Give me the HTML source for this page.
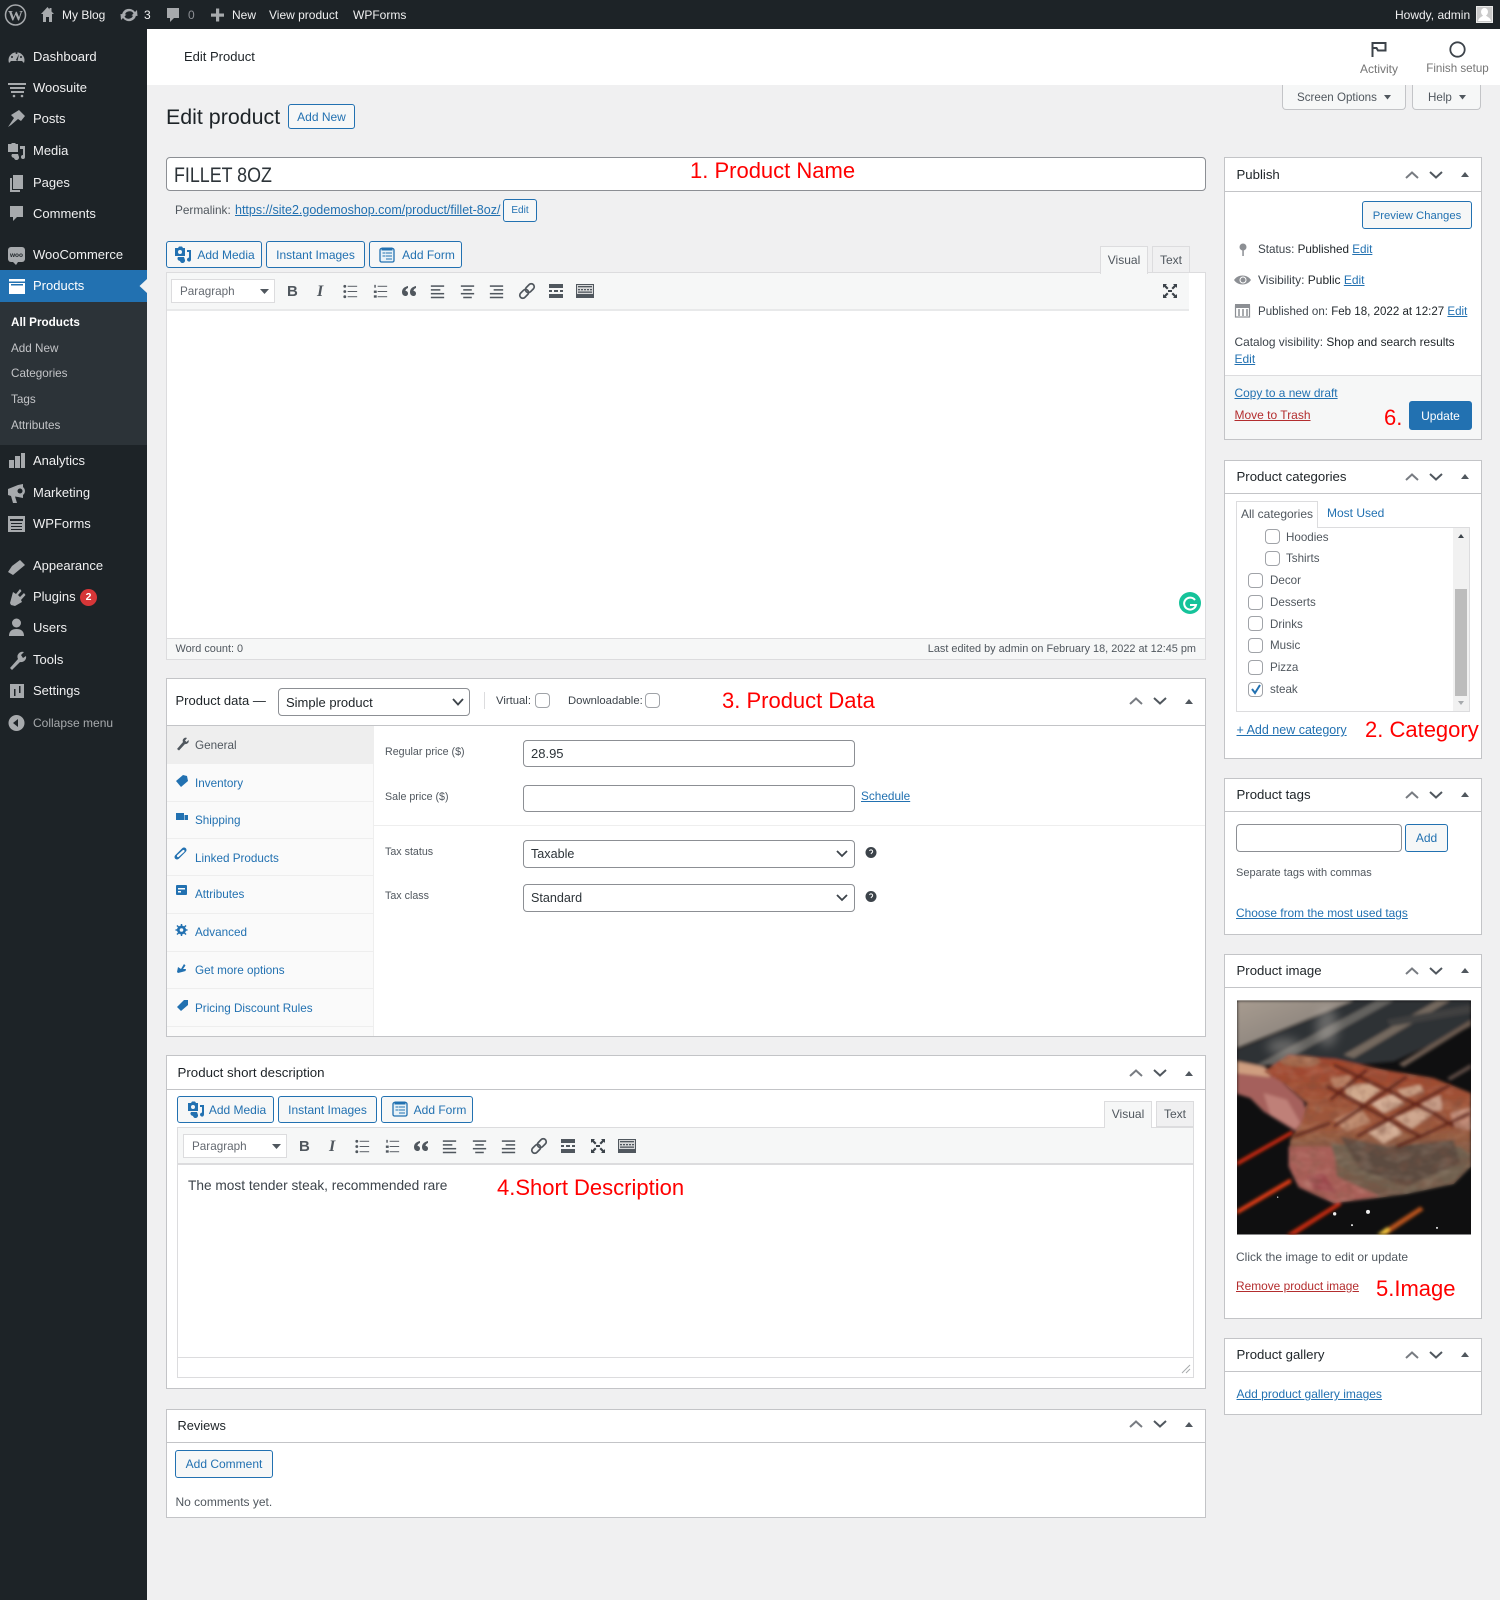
<!DOCTYPE html>
<html><head><meta charset="utf-8"><title>Edit product</title>
<style>
html,body{margin:0;padding:0}
body{width:1500px;height:1600px;position:relative;overflow:hidden;background:#f0f0f1;font-family:"Liberation Sans",sans-serif;font-size:12.5px;color:#3c434a}
div,span,a{position:absolute;box-sizing:border-box}
.t{white-space:nowrap;line-height:16px}
a.t,.lk{color:#2271b1;text-decoration:underline}
.m{color:#f0f0f1;font-size:13px;left:33px}
.s{color:#c3c4c7;font-size:11.7px;left:11px}
.ab{color:#f0f0f1;font-size:12px}
.b{background:#fff;border:1px solid #c3c4c7}
.l{background:#c3c4c7;height:1px}
.h{color:#1d2327;font-size:13.2px}
.btn{background:#f6f7f7;border:1px solid #2271b1;border-radius:3px;color:#2271b1;text-align:center;font-size:12px;line-height:26px;white-space:nowrap}
.r{color:#f00;font-size:22px;white-space:nowrap;line-height:26px}
.in{background:#fff;border:1px solid #8c8f94;border-radius:4px;color:#2c3338;font-size:13px;padding-left:7px;white-space:nowrap}
.cb{background:#fff;border:1px solid #a0a3a8;border-radius:4px;width:15px;height:15px}
.tab{background:#f0f0f1;border:1px solid #dcdcde;color:#50575e;font-size:12px;text-align:center;line-height:25px}
.ta{background:#f6f7f7;border-bottom:0;border-color:#dcdcde}
.pt{color:#2271b1;font-size:11.7px;left:195px}
.sep{background:#eee;height:1px;left:167px;width:206px}
.fl{color:#50575e;font-size:10.7px;left:385px}
.g{color:#50575e;font-size:11.6px}
.d{color:#3c434a;font-size:12px}
.tb{background:#f6f7f7}
</style></head><body>

<!-- admin bar -->
<div style="left:0;top:0;width:1500px;height:29px;background:#1d2327"></div>
<div class="t ab" style="left:62px;top:7px">My Blog</div>
<div class="t ab" style="left:144px;top:7px">3</div>
<div class="t ab" style="left:188px;top:7px;color:#8c8f94">0</div>
<div class="t ab" style="left:232px;top:7px">New</div>
<div class="t ab" style="left:269px;top:7px">View product</div>
<div class="t ab" style="left:353px;top:7px">WPForms</div>
<div class="t ab" style="left:1395px;top:7px">Howdy, admin</div>
<div style="left:1476px;top:6px;width:17px;height:17px;background:#c9c9c9;border:1px solid #e8e8e8"></div>

<!-- sidebar -->
<div style="left:0;top:29px;width:147px;height:1571px;background:#1d2327"></div>
<div style="left:0;top:302px;width:147px;height:143px;background:#2c3338"></div>
<div style="left:0;top:270px;width:147px;height:32px;background:#2271b1"></div>
<div class="t m" style="top:49px">Dashboard</div>
<div class="t m" style="top:80px">Woosuite</div>
<div class="t m" style="top:111px">Posts</div>
<div class="t m" style="top:143px">Media</div>
<div class="t m" style="top:175px">Pages</div>
<div class="t m" style="top:206px">Comments</div>
<div class="t m" style="top:247px">WooCommerce</div>
<div class="t m" style="top:278px;color:#fff">Products</div>
<div class="t s" style="top:315px;color:#fff;font-weight:bold">All Products</div>
<div class="t s" style="top:341px">Add New</div>
<div class="t s" style="top:366px">Categories</div>
<div class="t s" style="top:392px">Tags</div>
<div class="t s" style="top:418px">Attributes</div>
<div class="t m" style="top:453px">Analytics</div>
<div class="t m" style="top:485px">Marketing</div>
<div class="t m" style="top:516px">WPForms</div>
<div class="t m" style="top:558px">Appearance</div>
<div class="t m" style="top:589px">Plugins</div>
<div class="t m" style="top:620px">Users</div>
<div class="t m" style="top:652px">Tools</div>
<div class="t m" style="top:683px">Settings</div>
<div class="t m" style="top:715px;color:#a7aaad;font-size:12px">Collapse menu</div>
<div class="t" style="left:80px;top:589px;width:17px;height:17px;border-radius:50%;background:#d63638;color:#fff;font-size:10.5px;text-align:center;font-weight:bold">2</div>

<!-- header -->
<div style="left:147px;top:29px;width:1353px;height:56px;background:#fff"></div>
<div class="t" style="left:184px;top:49px;color:#1d2327;font-size:13px">Edit Product</div>
<div class="t" style="left:1339px;top:61px;width:80px;text-align:center;color:#757575;font-size:12px">Activity</div>
<div class="t" style="left:1417.500px;top:61px;width:80px;text-align:center;color:#757575;font-size:11.6px">Finish setup</div>
<div style="left:1282px;top:85px;width:124px;height:25px;background:#f6f7f7;border:1px solid #c3c4c7;border-top:0;border-radius:0 0 4px 4px"></div>
<div style="left:1412px;top:85px;width:69px;height:25px;background:#f6f7f7;border:1px solid #c3c4c7;border-top:0;border-radius:0 0 4px 4px"></div>
<div class="t g" style="left:1297px;top:90px">Screen Options</div>
<div class="t g" style="left:1428px;top:90px">Help</div>

<div class="t" style="left:166px;top:105px;line-height:24px;font-size:21.4px;color:#1d2327">Edit product</div>
<div class="btn" style="left:288px;top:104px;width:67px;height:25px;line-height:24px">Add New</div>

<!-- title -->
<div class="in" style="left:166px;top:157px;width:1040px;height:34px;padding-left:8px"><span style="left:7px;top:1px;font-size:21px;line-height:34px;color:#2c3338;display:block;transform:scaleX(.85);transform-origin:0 0">FILLET 8OZ</span></div>
<div class="r" style="left:690px;top:158px">1. Product Name</div>
<div class="t d" style="left:175px;top:202px;color:#50575e;font-size:11.8px">Permalink:</div>
<a class="t" style="left:235px;top:202px;font-size:12.5px">https://site2.godemoshop.com/product/fillet-8oz/</a>
<div class="btn" style="left:503px;top:199px;width:34px;height:23px;font-size:10px;line-height:22px">Edit</div>

<div class="btn" style="left:166px;top:241px;width:96px;height:27px;padding-left:24px">Add Media</div>
<div class="btn" style="left:266px;top:241px;width:99px;height:27px">Instant Images</div>
<div class="btn" style="left:369px;top:241px;width:93px;height:27px;padding-left:26px">Add Form</div>

<!-- main editor -->
<div class="b" style="left:166px;top:272px;width:1040px;height:388px;border-color:#dcdcde"></div>
<div class="tb" style="left:167px;top:273px;width:1022px;height:38px;border-bottom:2px solid #e8e9ea"></div>
<div class="tab ta" style="left:1100px;top:246px;width:48px;height:28px;line-height:26px">Visual</div>
<div class="tab" style="left:1152px;top:246px;width:38px;height:27px;line-height:26px">Text</div>
<div class="t" style="left:171px;top:279px;width:104px;height:24px;background:#fff;border:1px solid #dcdcde;line-height:24px;padding-left:8px;color:#646970;font-size:11.7px">Paragraph</div>
<div class="t" style="left:287px;top:283px;font:bold 15px/18px 'Liberation Sans',sans-serif;color:#50575e;width:10px">B</div>
<div class="t" style="left:317px;top:283px;font:italic bold 16px/18px 'Liberation Serif',serif;color:#50575e">I</div>
<div style="left:167px;top:638px;width:1038px;height:21px;background:#f6f7f7;border-top:1px solid #dcdcde"></div>
<div class="t" style="left:175.500px;top:641px;font-size:10.9px;color:#50575e">Word count: 0</div>
<div class="t" style="right:304px;top:641px;font-size:10.9px;color:#50575e">Last edited by admin on February 18, 2022 at 12:45 pm</div>

<!-- product data -->
<div class="b" style="left:166px;top:678px;width:1040px;height:359px"></div>
<div class="l" style="left:166px;top:725px;width:1040px"></div>
<div class="t h" style="left:175.500px;top:693px;font-size:13px">Product data —</div>
<div class="in" style="left:278px;top:688px;width:192px;height:28px;line-height:28px;font-size:13px;color:#1d2327">Simple product</div>
<div style="left:484px;top:692px;width:1px;height:17px;background:#dcdcde"></div>
<div class="t" style="left:496px;top:693px;font-size:11.3px;color:#3c434a">Virtual:</div>
<div class="cb" style="left:535px;top:693px"></div>
<div class="t" style="left:568px;top:693px;font-size:11.3px;color:#3c434a">Downloadable:</div>
<div class="cb" style="left:645px;top:693px"></div>
<div class="r" style="left:722px;top:688px">3. Product Data</div>

<div style="left:167px;top:726px;width:207px;height:310px;background:#fafafa;border-right:1px solid #eee"></div>
<div style="left:167px;top:726px;width:206px;height:38px;background:#eee"></div>
<div class="sep" style="top:801px"></div><div class="sep" style="top:838px"></div><div class="sep" style="top:875px"></div><div class="sep" style="top:913px"></div><div class="sep" style="top:951px"></div><div class="sep" style="top:988px"></div><div class="sep" style="top:1026px"></div>
<div class="t pt" style="top:738px;color:#50575e">General</div>
<div class="t pt" style="top:776px">Inventory</div>
<div class="t pt" style="top:813px">Shipping</div>
<div class="t pt" style="top:851px">Linked Products</div>
<div class="t pt" style="top:887px">Attributes</div>
<div class="t pt" style="top:925px">Advanced</div>
<div class="t pt" style="top:963px">Get more options</div>
<div class="t pt" style="top:1001px">Pricing Discount Rules</div>

<div class="t fl" style="top:744px">Regular price ($)</div>
<div class="in" style="left:523px;top:740px;width:332px;height:27px;line-height:26px">28.95</div>
<div class="t fl" style="top:789px">Sale price ($)</div>
<div class="in" style="left:523px;top:785px;width:332px;height:27px"></div>
<a class="t" style="left:861px;top:788px;font-size:11.8px">Schedule</a>
<div style="left:374px;top:825px;width:831px;height:1px;background:#eee"></div>
<div class="t fl" style="top:844px">Tax status</div>
<div class="in" style="left:523px;top:840px;width:332px;height:28px;line-height:27px;font-size:12.6px">Taxable</div>
<div class="t fl" style="top:888px">Tax class</div>
<div class="in" style="left:523px;top:884px;width:332px;height:28px;line-height:27px;font-size:12.6px">Standard</div>

<!-- short description -->
<div class="b" style="left:166px;top:1055px;width:1040px;height:334px"></div>
<div class="l" style="left:166px;top:1089px;width:1040px"></div>
<div class="t h" style="left:177.500px;top:1065px;font-size:13.3px">Product short description</div>
<div class="btn" style="left:177px;top:1096px;width:97px;height:27px;padding-left:24px">Add Media</div>
<div class="btn" style="left:278px;top:1096px;width:99px;height:27px">Instant Images</div>
<div class="btn" style="left:381px;top:1096px;width:92px;height:27px;padding-left:26px">Add Form</div>
<div class="b" style="left:177px;top:1127px;width:1017px;height:251px;border-color:#dcdcde"></div>
<div class="tb" style="left:178px;top:1128px;width:1015px;height:37px;border-bottom:2px solid #dcdcde"></div>
<div class="tab ta" style="left:1104px;top:1101px;width:48px;height:27px">Visual</div>
<div class="tab" style="left:1156px;top:1101px;width:38px;height:26px">Text</div>
<div class="t" style="left:183px;top:1134px;width:104px;height:24px;background:#fff;border:1px solid #dcdcde;line-height:24px;padding-left:8px;color:#646970;font-size:11.7px">Paragraph</div>
<div class="t" style="left:299px;top:1138px;font:bold 15px/18px 'Liberation Sans',sans-serif;color:#50575e">B</div>
<div class="t" style="left:329px;top:1138px;font:italic bold 16px/18px 'Liberation Serif',serif;color:#50575e">I</div>
<div class="t" style="left:188px;top:1178px;font-size:13.7px;color:#3c434a">The most tender steak, recommended rare</div>
<div class="r" style="left:497px;top:1175px">4.Short Description</div>
<div style="left:178px;top:1357px;width:1015px;height:20px;background:#fff;border-top:1px solid #dcdcde"></div>

<!-- reviews -->
<div class="b" style="left:166px;top:1409px;width:1040px;height:109px"></div>
<div class="l" style="left:166px;top:1442px;width:1040px"></div>
<div class="t h" style="left:177.500px;top:1418px;font-size:12.8px">Reviews</div>
<div class="btn" style="left:175px;top:1450px;width:98px;height:28px">Add Comment</div>
<div class="t" style="left:175.500px;top:1494px;font-size:12px;color:#50575e">No comments yet.</div>

<!-- publish -->
<div class="b" style="left:1224px;top:157px;width:258px;height:283px"></div>
<div class="l" style="left:1224px;top:191px;width:258px"></div>
<div class="t h" style="left:1236.500px;top:167px">Publish</div>
<div class="btn" style="left:1362px;top:201px;width:110px;height:28px;font-size:11.3px;line-height:28px">Preview Changes</div>
<div class="t d" style="left:1258px;top:241.500px;font-size:11.7px">Status: <b style="font-weight:normal;color:#1d2327">Published</b> <span class="lk" style="position:static">Edit</span></div>
<div class="t d" style="left:1258px;top:272px">Visibility: <b style="font-weight:normal;color:#1d2327">Public</b> <span class="lk" style="position:static">Edit</span></div>
<div class="t d" style="left:1258px;top:303.500px;font-size:11.55px">Published on: <b style="font-weight:normal;color:#1d2327">Feb 18, 2022 at 12:27</b> <span class="lk" style="position:static">Edit</span></div>
<div class="t d" style="left:1234.500px;top:334px;font-size:11.9px">Catalog visibility: <b style="font-weight:normal;color:#1d2327">Shop and search results</b></div>
<a class="t" style="left:1234.500px;top:351px;font-size:12px">Edit</a>
<div style="left:1225px;top:375px;width:256px;height:64px;background:#f6f7f7;border-top:1px solid #dcdcde"></div>
<a class="t" style="left:1234.500px;top:385px;font-size:11.9px">Copy to a new draft</a>
<a class="t" style="left:1234.500px;top:407px;font-size:12px;color:#b32d2e">Move to Trash</a>
<div class="r" style="left:1384px;top:405px">6.</div>
<div class="btn" style="left:1409px;top:401px;width:63px;height:29px;background:#2271b1;color:#fff;line-height:28px">Update</div>

<!-- categories -->
<div class="b" style="left:1224px;top:460px;width:258px;height:299px"></div>
<div class="l" style="left:1224px;top:493px;width:258px"></div>
<div class="t h" style="left:1236.500px;top:469px">Product categories</div>
<div class="b" style="left:1236px;top:527px;width:234px;height:185px;border-color:#dcdcde"></div>
<div style="left:1236px;top:501px;width:82px;height:27px;background:#fff;border:1px solid #dcdcde;border-bottom:0;line-height:25px;text-align:center;font-size:12px;color:#50575e">All categories</div>
<div class="t" style="left:1327px;top:505px;font-size:12px;color:#2271b1">Most Used</div>
<div style="left:1453px;top:528px;width:16px;height:183px;background:#f1f1f1"></div>
<div style="left:1455px;top:589px;width:12px;height:107px;background:#bcbcbc"></div>
<div class="cb" style="left:1265px;top:529px"></div><div class="t g" style="left:1286px;top:530px">Hoodies</div>
<div class="cb" style="left:1265px;top:551px"></div><div class="t g" style="left:1286px;top:551px">Tshirts</div>
<div class="cb" style="left:1248px;top:573px"></div><div class="t g" style="left:1270px;top:573px">Decor</div>
<div class="cb" style="left:1248px;top:595px"></div><div class="t g" style="left:1270px;top:595px">Desserts</div>
<div class="cb" style="left:1248px;top:616px"></div><div class="t g" style="left:1270px;top:617px">Drinks</div>
<div class="cb" style="left:1248px;top:638px"></div><div class="t g" style="left:1270px;top:638px">Music</div>
<div class="cb" style="left:1248px;top:660px"></div><div class="t g" style="left:1270px;top:660px">Pizza</div>
<div class="cb" style="left:1248px;top:682px"></div><div class="t g" style="left:1270px;top:682px">steak</div>
<a class="t" style="left:1236.500px;top:722px;font-size:12.5px">+ Add new category</a>
<div class="r" style="left:1365px;top:717px;font-size:22px">2. Category</div>

<!-- tags -->
<div class="b" style="left:1224px;top:778px;width:258px;height:157px"></div>
<div class="l" style="left:1224px;top:811px;width:258px"></div>
<div class="t h" style="left:1236.500px;top:787px">Product tags</div>
<div class="in" style="left:1236px;top:824px;width:166px;height:28px"></div>
<div class="btn" style="left:1405px;top:824px;width:43px;height:28px">Add</div>
<div class="t" style="left:1236px;top:865px;font-size:11px;color:#50575e">Separate tags with commas</div>
<a class="t" style="left:1236px;top:905px;font-size:11.9px">Choose from the most used tags</a>

<!-- image -->
<div class="b" style="left:1224px;top:954px;width:258px;height:365px"></div>
<div class="l" style="left:1224px;top:987px;width:258px"></div>
<div class="t h" style="left:1236.500px;top:963px">Product image</div>
<svg style="position:absolute;left:1237px;top:1000px" width="234" height="235" viewBox="50 32 702 702">
<defs><filter id="bl" x="-10%" y="-10%" width="120%" height="120%"><feGaussianBlur stdDeviation="5"/></filter>
<filter id="bs" x="-30%" y="-30%" width="160%" height="160%"><feGaussianBlur stdDeviation="16"/></filter>
<filter id="nz" x="0" y="0" width="100%" height="100%"><feTurbulence type="fractalNoise" baseFrequency=".02 .035" numOctaves="2" seed="7"/><feColorMatrix values="0 0 0 0 .92  0 0 0 0 .7  0 0 0 0 .55  1.6 0 0 0 -.7"/><feGaussianBlur stdDeviation="3"/><feComposite in2="SourceGraphic" operator="in"/></filter>
<filter id="nd" x="0" y="0" width="100%" height="100%"><feTurbulence type="fractalNoise" baseFrequency=".03" numOctaves="2" seed="3"/><feColorMatrix values="0 0 0 0 .2  0 0 0 0 .08  0 0 0 0 .05  0 2 0 0 -.85"/><feGaussianBlur stdDeviation="2.500"/><feComposite in2="SourceGraphic" operator="in"/></filter>
<linearGradient id="tp" x1="0" y1="0" x2="1" y2="1"><stop offset="0" stop-color="#a89c90"/><stop offset="1" stop-color="#7c7672"/></linearGradient>
<linearGradient id="st" x1="0" y1="0" x2="0" y2="1"><stop offset="0" stop-color="#a2452c"/><stop offset=".5" stop-color="#9c5a3e"/><stop offset=".75" stop-color="#77604e"/><stop offset="1" stop-color="#6e5648"/></linearGradient>
<path id="mt" d="M130 245 L205 195 L300 205 L345 208 L480 238 L640 265 L752 310 L752 530 L700 582 L560 612 L490 622 L340 640 L235 592 L205 530 L210 450 L245 395 L260 340 L190 280Z"/></defs>
<rect x="50" y="32" width="702" height="702" fill="#0f0f10"/>
<g filter="url(#bl)">
<polygon points="50,32 400,32 50,175" fill="url(#tp)"/>
<polygon points="50,180 400,32 752,32 752,110 520,215 400,225 150,225 50,240" fill="#2f3134"/>
<polygon points="110,225 470,32 520,32 170,225" fill="#64625f"/>
<polygon points="370,195 650,32 690,32 400,205" fill="#75695f"/>
<polygon points="535,222 752,90 752,106 550,232" fill="#6a5a50"/>
<polygon points="680,265 752,222 752,236 690,272" fill="#5d4c44"/>
<polygon points="500,90 752,45 752,70 510,110" fill="#3f3f41"/>
<polygon points="50,515 215,422 218,432 50,528" fill="#d42a10"/>
<polygon points="50,660 210,566 214,578 50,674" fill="#e63c12"/>
<polygon points="198,734 355,636 365,644 225,734" fill="#c92c10"/>
<polygon points="470,734 600,650 610,660 500,734" fill="#b8521a"/>
<polygon points="470,734 500,712 510,720 495,734" fill="#f2c23a"/>
<path d="M50 215 L135 232 L250 335 L262 380 L225 424 L130 365 L90 325 L50 312Z" fill="#a5605c"/>
<path d="M50 215 L135 232 L150 262 L50 250Z" fill="#cf9e80"/>
<path d="M130 310 L200 330 L240 400 L225 418 L150 375Z" fill="#bf8078"/>
<use href="#mt" fill="url(#st)"/>
<path d="M205 470 L340 470 L350 560 L480 620 L340 640 L235 592 L205 530Z" fill="#a85f58"/>
<path d="M330 460 L520 480 L720 470 L752 500 L700 580 L560 610 L430 570 L350 520Z" fill="#70604f"/>
<path d="M360 440 L500 470 L700 450 L720 520 L560 590 L420 540Z" fill="#5c4c40"/>
<path d="M370 290 L450 280 L480 300 L430 340 L380 320Z" fill="#cfa88c"/>
<path d="M450 340 L520 310 L550 340 L490 370Z" fill="#d3ad95"/>
<path d="M520 380 L610 350 L640 370 L570 420Z" fill="#c9a088"/>
<path d="M440 425 L510 390 L545 430 L490 460Z" fill="#d0aa92"/>
<path d="M530 300 L600 285 L610 305 L550 325Z" fill="#c89c82"/>
<path d="M600 340 L660 315 L665 360 L630 370Z" fill="#c49a85"/>
<path d="M330 265 L390 255 L400 280 L340 295Z" fill="#b87f63"/>
<path d="M340 390 L420 355 L450 395 L380 425Z" fill="#bd8a6e"/>
<path d="M690 370 L750 355 L750 420 L700 410Z" fill="#c28c78"/>
<ellipse cx="240" cy="215" rx="60" ry="16" fill="#a56a4e"/>
<path d="M260 560 L310 550 L350 610 L280 600Z" fill="#9c4a4e"/>
</g>
<use href="#mt" filter="url(#nz)" opacity=".28"/>
<use href="#mt" filter="url(#nd)" opacity=".45"/>
<g stroke="#571f12" stroke-width="8" fill="none" filter="url(#bl)" opacity=".9">
<path d="M340 225 L500 300 L640 370 L700 410"/><path d="M320 290 L450 360 L600 440"/>
<path d="M440 240 L330 330"/><path d="M560 260 L430 350 L340 410"/><path d="M690 285 L500 390 L410 440"/><path d="M750 370 L600 440 L530 470"/>
<path d="M220 440 L330 400"/>
</g>
<g fill="#d5cec6" filter="url(#bs)" opacity=".35"><ellipse cx="320" cy="110" rx="32" ry="60"/><ellipse cx="190" cy="170" rx="50" ry="24"/></g>
<g fill="#eee"><circle cx="443" cy="666" r="6"/><circle cx="343" cy="672" r="5"/><circle cx="395" cy="706" r="3"/><circle cx="650" cy="714" r="3"/><circle cx="172" cy="622" r="2"/></g>
</svg>
<div class="t g" style="left:1236px;top:1249px;font-size:12px">Click the image to edit or update</div>
<a class="t" style="left:1236px;top:1278px;font-size:11.9px;color:#b32d2e">Remove product image</a>
<div class="r" style="left:1376px;top:1276px">5.Image</div>

<!-- gallery -->
<div class="b" style="left:1224px;top:1338px;width:258px;height:77px"></div>
<div class="l" style="left:1224px;top:1371px;width:258px"></div>
<div class="t h" style="left:1236.500px;top:1347px">Product gallery</div>
<a class="t" style="left:1236.500px;top:1386px;font-size:12px">Add product gallery images</a>

<!-- icon overlay -->
<svg style="position:absolute;left:0;top:0" width="1500" height="1600" viewBox="0 0 1500 1600">
<defs>
<symbol id="up" viewBox="0 0 16 10"><path d="M2 8 L8 2.5 L14 8" fill="none" stroke="#787c82" stroke-width="2"/></symbol>
<symbol id="dn" viewBox="0 0 16 10"><path d="M2 2 L8 7.5 L14 2" fill="none" stroke="#50575e" stroke-width="2"/></symbol>
<symbol id="ul" viewBox="0 0 20 20"><g fill="#50575e"><circle cx="4" cy="4.5" r="1.5"/><circle cx="4" cy="10" r="1.5"/><circle cx="4" cy="15.5" r="1.5"/><rect x="7" y="4" width="10" height="1"/><rect x="7" y="9.5" width="10" height="1"/><rect x="7" y="15" width="10" height="1"/></g></symbol>
<symbol id="ol" viewBox="0 0 20 20"><g fill="#50575e"><rect x="3.500" y="3" width="1.500" height="3"/><rect x="3" y="9" width="3" height="2.500"/><rect x="3" y="14" width="3" height="2.500"/><rect x="7" y="4" width="10" height="1"/><rect x="7" y="9.5" width="10" height="1"/><rect x="7" y="15" width="10" height="1"/></g></symbol>
<symbol id="qt" viewBox="0 0 20 20"><g fill="#50575e"><path d="M9 5 C5 6 3 8 3 11 C3 14 5 15 6.5 15 C8 15 9 14 9 12.5 C9 11 8 10 6.5 10 C6.5 8.5 7.5 7.5 9 7Z"/><path d="M17 5 C13 6 11 8 11 11 C11 14 13 15 14.5 15 C16 15 17 14 17 12.5 C17 11 16 10 14.5 10 C14.5 8.5 15.5 7.5 17 7Z"/></g></symbol>
<symbol id="al" viewBox="0 0 20 20"><g fill="#50575e"><rect x="3" y="3.5" width="14" height="1.6"/><rect x="3" y="7.5" width="10" height="1.6"/><rect x="3" y="11.5" width="14" height="1.6"/><rect x="3" y="15.5" width="14" height="1.6"/></g></symbol>
<symbol id="ac" viewBox="0 0 20 20"><g fill="#50575e"><rect x="3" y="3.5" width="14" height="1.6"/><rect x="5.5" y="7.5" width="9" height="1.6"/><rect x="3" y="11.5" width="14" height="1.6"/><rect x="5.5" y="15.5" width="9" height="1.6"/></g></symbol>
<symbol id="ar" viewBox="0 0 20 20"><g fill="#50575e"><rect x="3" y="3.5" width="14" height="1.6"/><rect x="7" y="7.5" width="10" height="1.6"/><rect x="3" y="11.5" width="14" height="1.6"/><rect x="3" y="15.5" width="14" height="1.6"/></g></symbol>
<symbol id="lnk" viewBox="0 0 20 20"><g fill="none" stroke="#50575e" stroke-width="1.7" transform="rotate(-45 10 10)"><rect x="1" y="7" width="10" height="6" rx="3"/><rect x="9" y="7" width="10" height="6" rx="3"/></g></symbol>
<symbol id="hr" viewBox="0 0 20 20"><g fill="#50575e"><rect x="3" y="3" width="14" height="4"/><rect x="3" y="9" width="3" height="2"/><rect x="8" y="9" width="4" height="2"/><rect x="14" y="9" width="3" height="2"/><rect x="3" y="13" width="14" height="4"/></g></symbol>
<symbol id="ex" viewBox="0 0 20 20"><g fill="#3c434a"><path d="M3 3 L7 3 L5.800 4.200 L8.500 7 L7 8.500 L4.200 5.800 L3 7Z"/><path d="M17 3 L13 3 L14.200 4.200 L11.500 7 L13 8.500 L15.800 5.800 L17 7Z"/><path d="M3 17 L7 17 L5.800 15.800 L8.500 13 L7 11.500 L4.200 14.200 L3 13Z"/><path d="M17 17 L13 17 L14.200 15.800 L11.500 13 L13 11.500 L15.800 14.200 L17 13Z"/><rect x="8" y="9" width="4" height="2"/></g></symbol>
<symbol id="kb" viewBox="0 0 20 20"><rect x="1.500" y="3.500" width="17" height="13" fill="#d8d9da" stroke="#50575e"/><g fill="#50575e"><rect x="3" y="5" width="14" height="1.300"/><rect x="3" y="8" width="2" height="1.300"/><rect x="6" y="8" width="2" height="1.300"/><rect x="9" y="8" width="2" height="1.300"/><rect x="12" y="8" width="2" height="1.300"/><rect x="15" y="8" width="2" height="1.300"/><rect x="3" y="10.500" width="14" height="1.300"/><rect x="2" y="13" width="16" height="3"/></g></symbol>
<symbol id="mediaB" viewBox="0 0 20 20"><path d="M2 3 H5 L6 1.5 H9 L10 3 H12 V11 H2Z M7 5 A2 2 0 1 0 7 9 A2 2 0 1 0 7 5Z" fill="#2271b1" fill-rule="evenodd"/><path d="M14 5 H18 V14.5 A2 2 0 1 1 16 12.6 V7 H14Z M5 12 H11 L12 15 A2.5 2.5 0 0 1 7 16 A2.5 2.5 0 0 1 5 12Z" fill="#2271b1"/></symbol>
<symbol id="formB" viewBox="0 0 20 20"><rect x="3" y="3.500" width="14" height="13.500" rx="1.500" fill="#e8f2f8" stroke="#2271b1" stroke-width="1.300"/><rect x="4.500" y="2.500" width="11" height="3" fill="#2271b1"/><g fill="#2271b1"><rect x="5.500" y="7.500" width="3" height="1"/><rect x="9" y="7.500" width="6" height="1"/><rect x="5.500" y="10.500" width="3" height="1"/><rect x="9" y="10.500" width="6" height="1"/><rect x="9" y="13.500" width="6" height="1"/></g></symbol>
</defs>

<!-- admin bar icons -->
<g fill="#a7aaad">
<circle cx="15.500" cy="15" r="10" fill="none" stroke="#a7aaad" stroke-width="1.500"/>
<text x="15.500" y="20.500" text-anchor="middle" font-family="Liberation Serif, serif" font-weight="bold" font-size="15" fill="#a7aaad">W</text>
<path d="M47.5 7 L41 14 H43 V22 H46 V17 H49 V22 H52 V14 H54 L51.5 11.5 V8 H49.5 V9.5Z"/>
<path d="M122 15 A7 6.5 0 0 1 135 12 L137 10 L137.5 16 L131.5 15.5 L133.5 13.5 A4.5 4 0 0 0 125 15Z M136 15 A7 6.5 0 0 1 123 18 L121 20 L120.5 14 L126.5 14.5 L124.5 16.5 A4.5 4 0 0 0 133 15Z"/>
<path d="M167 8 H179 V18 H174 L170 22 V18 H167Z"/>
<rect x="211" y="13.5" width="13" height="3.2"/><rect x="216" y="8.5" width="3.2" height="13"/>
</g>
<path d="M1478 21 C1479 17 1482 17 1483 15.500 A3.500 4 0 1 1 1486 15.500 C1487 17 1490 17 1491 21Z" fill="#fff"/>

<!-- sidebar icons -->
<g fill="#a7aaad">
<path d="M9 63 A8 8 0 1 1 24 63 L22 61 H11Z"/><circle cx="16.500" cy="53" r="1" fill="#1d2327"/><circle cx="12" cy="57" r="1" fill="#1d2327"/><circle cx="21" cy="57" r="1" fill="#1d2327"/><path d="M16 60 L19 54 L17.500 61Z" fill="#1d2327"/>
<path d="M8 83 H26 V85 H8Z M10 87 H25 V89 H10Z M11 91 H24 V93 H11Z"/><circle cx="14" cy="96" r="1.300"/><circle cx="22" cy="96" r="1.300"/>
<path d="M8 127 L14 118 L11 115 L19 110 L25 116 L21 121 L18 119 L11 125 Z"/>
<path d="M8 144 H11 L12 143 H15 L16 144 H18 V152 H8Z"/><path d="M20 146 H25 V157 A2 2 0 1 1 23 155 V149 H20Z M12 154 H18 L19 157 A2.500 2.500 0 0 1 14 158 A2.500 2.500 0 0 1 12 154Z"/>
<path d="M13 175 H23 V189 H13Z"/><path d="M10 178 H12 V190 H20 V192 H10Z"/>
<path d="M10 206 H23 V217 H17 L13 221 V217 H10Z"/>
<rect x="8" y="247" width="17" height="15" rx="3"/><path d="M13 262 L18 262 L16 265Z"/>
<rect x="9" y="460" width="5" height="8"/><rect x="15" y="456" width="5" height="12"/><rect x="21" y="453" width="4" height="15"/>
<path d="M8 489 L18 485 L23 484 V498 L18 497 L15 496.500 L17 503 H13 L11 496 L8 495Z"/><circle cx="20" cy="491" r="5"/>
<rect x="8" y="516" width="17" height="16"/>
<path d="M8 572 L12 566 L20 560 L25 565 L19 570 L13 575Z"/>
<path d="M10 603 L13 592 L16 594 L20 589 L21.5 591 L18 595 L20 597 L24 593 L25.5 595 L21 600 L22 602 L15 606 L11 605Z"/>
<circle cx="16.500" cy="623" r="4.500"/><path d="M9 636 C9 631 12 629 16.500 629 C21 629 24 631 24 636Z"/>
<path d="M10 668 L18 659 A5 5 0 0 1 24 652 L21 655 L23 658 L26 656 A5 5 0 0 1 20 662 L12 670Z"/>
<rect x="10" y="684" width="14" height="14"/>
<circle cx="16.500" cy="723" r="8"/>
</g>
<circle cx="20" cy="491" r="2.500" fill="#1d2327"/>
<text x="16.500" y="257" text-anchor="middle" font-family="Liberation Sans, sans-serif" font-weight="bold" font-size="6.500" fill="#1d2327">woo</text>
<path d="M18 719 L13 723 L18 727Z" fill="#1d2327"/>
<g fill="#1d2327"><rect x="10" y="519" width="13" height="2"/><rect x="11" y="523" width="11" height="1"/><rect x="11" y="526" width="11" height="1"/><rect x="11" y="529" width="11" height="1"/>
<rect x="14" y="689" width="1.500" height="7"/><rect x="19" y="686" width="1.500" height="7"/></g>
<path d="M147 279 L139.5 286 L147 293Z" fill="#f0f0f1"/>
<path d="M9 279 H25 V294 H9Z" fill="#fff"/><rect x="11" y="284" width="12" height="1.500" fill="#2271b1"/><rect x="9" y="281.500" width="16" height="1.500" fill="#2271b1"/>

<!-- header icons -->
<path d="M1372.5 57 V43 H1385.5 V50.5 H1378 L1376.5 48 H1373" fill="none" stroke="#3c434a" stroke-width="2"/>
<circle cx="1457.5" cy="49.5" r="7.2" fill="none" stroke="#3c434a" stroke-width="1.8"/>
<path d="M1384 95 H1391 L1387.500 99.500Z M1459 95 H1466 L1462.500 99.500Z" fill="#50575e"/>

<!-- media buttons -->
<use href="#mediaB" x="173" y="245" width="20" height="20"/><use href="#formB" x="377" y="245" width="20" height="20"/>
<use href="#mediaB" x="186" y="1100" width="20" height="20"/><use href="#formB" x="390" y="1099" width="20" height="20"/>

<!-- main toolbar -->
<path d="M260 289 H269 L264.5 294Z M272 1144 H281 L276.5 1149Z" fill="#50575e"/>
<use href="#ul" x="341" y="282" width="19" height="19"/><use href="#ol" x="371" y="282" width="19" height="19"/><use href="#qt" x="399" y="281" width="20" height="20"/><use href="#al" x="428" y="282" width="19" height="19"/><use href="#ac" x="458" y="282" width="19" height="19"/><use href="#ar" x="487" y="282" width="19" height="19"/><use href="#lnk" x="517" y="281" width="20" height="20"/><use href="#hr" x="546" y="281" width="20" height="20"/><use href="#kb" x="575" y="281" width="20" height="20"/><use href="#ex" x="1160" y="281" width="20" height="20"/>
<use href="#ul" x="353" y="1137" width="19" height="19"/><use href="#ol" x="383" y="1137" width="19" height="19"/><use href="#qt" x="411" y="1136" width="20" height="20"/><use href="#al" x="440" y="1137" width="19" height="19"/><use href="#ac" x="470" y="1137" width="19" height="19"/><use href="#ar" x="499" y="1137" width="19" height="19"/><use href="#lnk" x="529" y="1136" width="20" height="20"/><use href="#hr" x="558" y="1136" width="20" height="20"/><use href="#ex" x="588" y="1136" width="20" height="20"/><use href="#kb" x="617" y="1136" width="20" height="20"/>
<circle cx="1190" cy="603" r="11" fill="#15c39a"/><path d="M1195 600 A6 6 0 1 0 1196 605 H1190" fill="none" stroke="#fff" stroke-width="2"/>
<path d="M1182 1373 L1190 1365 M1186 1373 L1190 1369" stroke="#a7aaad"/>

<!-- product data select arrows -->
<g fill="none" stroke="#3c434a" stroke-width="1.8"><path d="M453 699 L458 704.5 L463 699"/><path d="M837 851 L842 856 L847 851"/><path d="M837 895 L842 900 L847 895"/></g>
<g fill="#3c434a"><circle cx="871" cy="852.5" r="5.5"/><circle cx="871" cy="896.5" r="5.5"/></g>
<path d="M869.5 851 A1.6 1.6 0 1 1 871.5 853 L871 854 M869.5 895 A1.6 1.6 0 1 1 871.5 897 L871 898" fill="none" stroke="#fff" stroke-width="1"/>

<!-- product data tab icons -->
<path d="M177 749 L183 742 A3 3 0 0 1 187 738 L185 740.5 L186.5 742 L188.5 740 A3 3 0 0 1 185 744 L179 750.5Z" fill="#50575e"/>
<g fill="#2271b1">
<path d="M176 781 L183 775 L187 776 L188 781 L181 787Z"/>
<rect x="176" y="813" width="8" height="7"/><path d="M184.500 815 H188 V820 H184.500Z"/>
<g><path d="M177 857 L184 850" stroke="#2271b1" stroke-width="5" stroke-linecap="round" fill="none"/><path d="M178 856 L183.500 851" stroke="#fafafa" stroke-width="2.2" stroke-linecap="round" fill="none"/></g>
<rect x="176" y="885" width="11" height="10" rx="1"/>
<circle cx="181.500" cy="930" r="4.500"/><path d="M181.500 924 V936 M175.500 930 H187.500 M177 925.500 L186 934.500 M186 925.500 L177 934.500" stroke="#2271b1" stroke-width="1.500"/>
<path d="M177 972 L178 967 L181 969 L184 964 L185.500 965.500 L183 969 L186 969 L185.500 971 L182 972 L178 973Z"/>
<path d="M177 1007 L184 1000 H188 V1005 L181 1011Z"/>
</g>
<rect x="178" y="888" width="7" height="1.500" fill="#fafafa"/><rect x="178" y="891" width="3" height="1.500" fill="#fafafa"/>
<circle cx="181.500" cy="930" r="1.800" fill="#fafafa"/>

<!-- meta box controls -->
<use href="#up" x="1128" y="696" width="16" height="10"/><use href="#dn" x="1152" y="696" width="16" height="10"/><path d="M1185 704 L1189 699 L1193 704Z" fill="#50575e"/>
<use href="#up" x="1128" y="1068" width="16" height="10"/><use href="#dn" x="1152" y="1068" width="16" height="10"/><path d="M1185 1076 L1189 1071 L1193 1076Z" fill="#50575e"/>
<use href="#up" x="1128" y="1419" width="16" height="10"/><use href="#dn" x="1152" y="1419" width="16" height="10"/><path d="M1185 1427 L1189 1422 L1193 1427Z" fill="#50575e"/>
<use href="#up" x="1404" y="170" width="16" height="10"/><use href="#dn" x="1428" y="170" width="16" height="10"/><path d="M1461 177 L1465 172 L1469 177Z" fill="#50575e"/>
<use href="#up" x="1404" y="472" width="16" height="10"/><use href="#dn" x="1428" y="472" width="16" height="10"/><path d="M1461 479 L1465 474 L1469 479Z" fill="#50575e"/>
<use href="#up" x="1404" y="790" width="16" height="10"/><use href="#dn" x="1428" y="790" width="16" height="10"/><path d="M1461 797 L1465 792 L1469 797Z" fill="#50575e"/>
<use href="#up" x="1404" y="966" width="16" height="10"/><use href="#dn" x="1428" y="966" width="16" height="10"/><path d="M1461 973 L1465 968 L1469 973Z" fill="#50575e"/>
<use href="#up" x="1404" y="1350" width="16" height="10"/><use href="#dn" x="1428" y="1350" width="16" height="10"/><path d="M1461 1357 L1465 1352 L1469 1357Z" fill="#50575e"/>

<!-- publish icons -->
<g fill="#8c8f94"><circle cx="1243" cy="247" r="3.500"/><rect x="1242.300" y="249" width="1.500" height="7"/>
<path d="M1234 280 C1238 274 1247 274 1251 280 C1247 286 1238 286 1234 280Z"/></g>
<circle cx="1243" cy="280" r="3.500" fill="#fff"/><circle cx="1243" cy="280" r="2.500" fill="#8c8f94"/>
<rect x="1235.500" y="306" width="14" height="11" fill="none" stroke="#8c8f94" stroke-width="1.200"/><rect x="1235" y="304" width="15" height="4" fill="#8c8f94"/>
<path d="M1239 309 V316 M1243 309 V316 M1247 309 V316" stroke="#8c8f94" stroke-width="1.500"/>

<!-- category check + scroll arrows -->
<path d="M1252 689 L1255 693 L1260 685" fill="none" stroke="#2271b1" stroke-width="2"/>
<path d="M1458 538 L1461 534 L1464 538Z" fill="#3c434a"/><path d="M1458 701 L1461 705 L1464 701Z" fill="#a7aaad"/>
</svg>
</body></html>
